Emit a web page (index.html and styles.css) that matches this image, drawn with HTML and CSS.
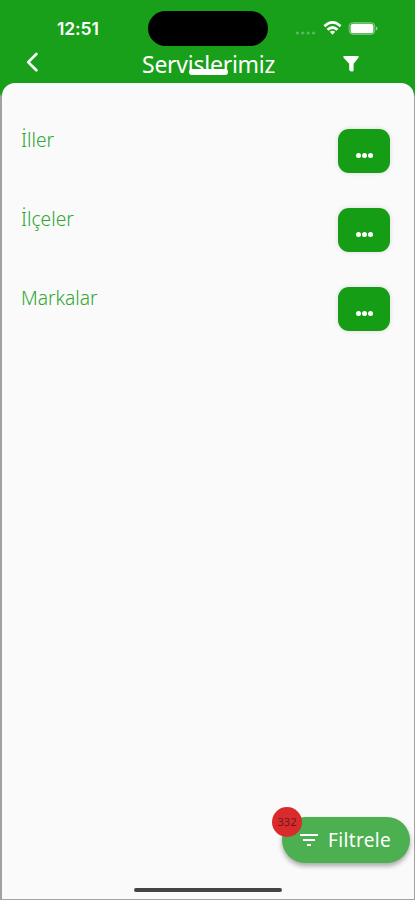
FILE: index.html
```html
<!DOCTYPE html>
<html lang="tr">
<head>
<meta charset="utf-8">
<title>Servislerimiz</title>
<link rel="stylesheet" href="styles.css">
</head>
<body>
<div class="screen">
  <header class="header">
    <div class="status">
      <span class="time">12:51</span>
      <span class="island"></span>
      <svg class="indicators" width="88" height="20" viewBox="0 0 88 20" fill="#fff">
        <g opacity=".28"><circle cx="3.4" cy="14" r="1.6"/><circle cx="8.8" cy="14" r="1.6"/><circle cx="14.2" cy="14" r="1.6"/><circle cx="19.6" cy="14" r="1.6"/></g>
        <g fill="none" stroke="#fff" stroke-width="2.8"><path d="M30.4 7.2Q38.5-.4 46.6 7.2"/><path d="M33.5 10.8Q38.5 6.2 43.5 10.8"/></g>
        <path d="M35.8 12.8Q38.5 10.6 41.2 12.8L38.5 15.8Z"/>
        <rect x="55.2" y="3.7" width="25.6" height="11.6" rx="3.6" fill="none" stroke="#fff" stroke-opacity=".45"/>
        <rect x="56.6" y="4.7" width="22.8" height="9.6" rx="2.6"/>
        <path d="M82 7.5Q85.4 9.5 82 11.5Z" opacity=".5"/>
      </svg>
    </div>
    <div class="toolbar">
      <svg class="back" width="14" height="22" viewBox="0 0 14 22"><path d="M11.4 3L3.2 11.1L11.4 19.2" fill="none" stroke="#fff" stroke-width="2.7" stroke-linecap="round" stroke-linejoin="round"/></svg>
      <h1 class="title">Servislerimiz</h1>
      <svg class="funnel" width="18" height="18" viewBox="0 0 18 18"><path d="M2 1H16Q17.2 1.3 16.6 2.5L11.6 8.8V15.3Q11.3 16.8 9.8 16.6Q7.4 16.4 7.2 14.8V8.8L1.4 2.5Q.9 1.3 2 1Z" fill="#fff"/></svg>
    </div>
  </header>
  <main class="sheet">
    <div class="row"><span class="label">İller</span><button class="more"><i></i><i></i><i></i></button></div>
    <div class="row"><span class="label">İlçeler</span><button class="more"><i></i><i></i><i></i></button></div>
    <div class="row"><span class="label">Markalar</span><button class="more"><i></i><i></i><i></i></button></div>
  </main>
  <button class="filter">
    <svg width="18" height="12" viewBox="0 0 18 12" fill="#fff"><path d="M0 0H18V2H0ZM3 5H15V7H3ZM7 10H11V12H7Z"/></svg>
    <span class="filter-label">Filtrele</span>
    <span class="badge">332</span>
  </button>
  <div class="home"></div>
</div>
</body>
</html>
```
FILE: styles.css
```css
* { box-sizing: border-box; }
body { margin: 0; font-family: "Noto Sans", sans-serif; }
button { border: 0; padding: 0; font: inherit; }
svg { display: block; flex: none; }
.screen {
  position: relative;
  width: 415px;
  height: 900px;
  overflow: hidden;
  display: flex;
  flex-direction: column;
  background: linear-gradient(#19a01b 93px, #a2a2a2 97px);
}
.header { height: 83px; flex: none; color: #fff; }
.status { height: 47px; padding: 11px 0 0 57px; display: flex; }
.time {
  width: 91px;
  padding-top: 8px;
  font: 600 17.5px/20px Inter, sans-serif;
  letter-spacing: -.1px;
}
.island { width: 120px; height: 35px; border-radius: 18px; background: #000; }
.indicators { margin: 8px 0 0 26px; }
.toolbar { height: 36px; display: flex; padding-left: 25px; }
.back { margin-top: 4px; }
.title {
  position: relative;
  width: 134px;
  margin: 1px 0 0 103px;
  font-size: 23px;
  line-height: 32px;
  font-weight: 400;
  white-space: nowrap;
  letter-spacing: -.25px;
}
.title::after {
  content: "";
  position: absolute;
  left: 47px;
  top: 21px;
  width: 39px;
  height: 6px;
  border-radius: 3px;
  background: #fff;
}
.funnel { margin: 8px 0 0 66px; }
.sheet {
  flex: 1;
  margin: 0 1px 1px 2px;
  padding: 46px 24px 0 19px;
  border-radius: 13px 13px 0 0;
  background: #fafafa;
}
.row { height: 79.2px; display: flex; justify-content: space-between; align-items: flex-start; }
.label {
  margin-top: -1px;
  color: #2fa532;
  font-size: 19.2px;
  line-height: 24px;
  font-weight: 300;
}
.more {
  width: 52px;
  height: 44px;
  padding-top: 9px;
  border-radius: 11px;
  background: #149d15;
  box-shadow: 0 0 5px #0002;
  display: flex;
  justify-content: center;
  align-items: center;
  gap: 1px;
}
.more i { width: 5px; height: 5px; border-radius: 50%; background: #fff; }
.filter {
  position: absolute;
  left: 282px;
  top: 817px;
  width: 128px;
  height: 46px;
  padding-left: 18px;
  display: flex;
  align-items: center;
  gap: 10px;
  border-radius: 23px;
  background: #4caf50;
  color: #fff;
  font-size: 19px;
  box-shadow: 0 3px 5px #0005;
}
.filter-label { letter-spacing: .35px; }
.badge {
  position: absolute;
  left: -10px;
  top: -10px;
  width: 30px;
  height: 30px;
  border-radius: 50%;
  background: #d92b2b;
  color: #6c1919;
  font-size: 11px;
  line-height: 29px;
  text-align: center;
}
.home {
  position: absolute;
  left: 134px;
  top: 888px;
  width: 148px;
  height: 4px;
  border-radius: 2px;
  background: #444;
}
```
